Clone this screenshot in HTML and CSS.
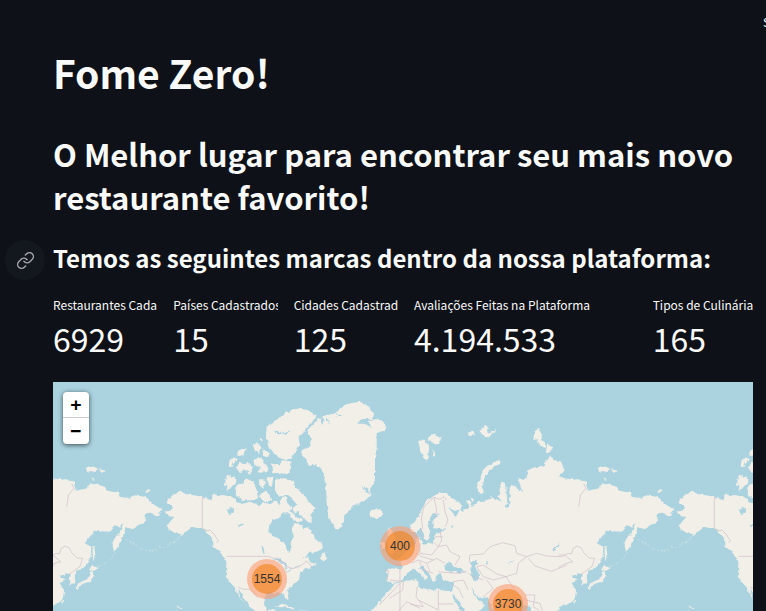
FILE: index.html
```html
<!DOCTYPE html>
<html lang="pt-BR">
<head>
<meta charset="utf-8">
<title>Fome Zero!</title>
<link rel="stylesheet" href="styles.css">
</head>
<body>
<div class="app">
  <header class="toolbar"><button class="share" type="button">Share</button></header>
  <main class="content">
    <h1>Fome Zero!</h1>
    <h2>O Melhor lugar para encontrar seu mais novo restaurante favorito!</h2>
    <div class="section-title">
      <a class="anchor" href="#marcas" aria-label="Link para a seção">
        <svg viewBox="0 0 24 24" fill="none" stroke="currentColor" stroke-width="1.8" stroke-linecap="round" stroke-linejoin="round"><path d="M10 13a5 5 0 0 0 7.54.54l3-3a5 5 0 0 0-7.07-7.07l-1.72 1.71"/><path d="M14 11a5 5 0 0 0-7.54-.54l-3 3a5 5 0 0 0 7.07 7.07l1.71-1.71"/></svg>
      </a>
      <h3 id="marcas">Temos as seguintes marcas dentro da nossa plataforma:</h3>
    </div>
    <dl class="metrics">
      <div class="metric"><dt>Restaurantes Cadastrados</dt><dd>6929</dd></div>
      <div class="metric"><dt>Países Cadastrados</dt><dd>15</dd></div>
      <div class="metric"><dt>Cidades Cadastradas</dt><dd>125</dd></div>
      <div class="metric"><dt>Avaliações Feitas na Plataforma</dt><dd>4.194.533</dd></div>
      <div class="metric"><dt>Tipos de Culinária</dt><dd>165</dd></div>
    </dl>
    <section class="map" aria-label="Mapa de restaurantes">
      <svg class="tiles" viewBox="0 0 700 229" preserveAspectRatio="xMinYMin slice" aria-hidden="true">
        <defs>
          <filter id="coast" filterUnits="userSpaceOnUse" x="-100" y="-20" width="1500" height="290">
            <feTurbulence type="fractalNoise" baseFrequency="0.22" numOctaves="2" seed="4"/>
            <feDisplacementMap in="SourceGraphic" scale="4" xChannelSelector="R" yChannelSelector="G"/>
          </filter>
          <g id="world">
            <g filter="url(#coast)">
            <!-- Alaska, western Canada, Aleutians -->
            <g class="land" transform="translate(-3 -2) scale(.33333)">
              <path d="M345 395L360 392 372 385 350 365 365 348 390 332 410 342 457 350 480 360 500 352 520 345 560 354V640L540 606 530 585 530 545 520 530 500 500 480 465 460 448 440 445 425 440 405 455 395 465 375 485 345 501 385 478 395 460 380 460 360 450 350 440 360 425 374 408 350 405z"/>
              <path d="M127 497L133 500 137 530 130 547 128 520zM125 553L145 565 130 573 119 570zM128 573L130 590 122 607 105 612 82 621 80 612 105 600 118 590 120 575zM76 619L88 620 82 631zM36 660L42 655 40 674zM107 262L117 256 125 262 136 258 142 268 132 277 112 277zM147 268L166 273 161 279 150 276zM122 291L134 297 130 302zM285 331L297 327 302 333 290 336zM380 674L397 686 392 688z"/>
              <path class="isles" d="M228 478L262 500 290 513 320 509 347 500M196 518L180 540 160 552 143 562M325 414L334 419"/>
            </g>
            <!-- Canada, USA, Greenland -->
            <g class="land" transform="translate(167 -2) scale(.33333)">
              <path d="M-20 344L0 345 20 350 40 360 65 372 90 365 115 375 135 368 150 372 165 365 180 375 188 345 198 352 202 370 214 382 205 400 190 400 180 412 160 420 148 435 145 455 160 470 190 485 200 500 205 515 215 505 212 490 222 470 215 450 220 430 240 432 250 445 262 442 275 455 285 475 305 490 310 505 290 515 265 520 250 535 265 530 272 550 290 550 268 565 250 570 240 580 237 600 215 618 200 635 207 655 200 660 190 640 170 638 140 640 132 655 133 680 145 690 165 688 168 700H110L75 660 55 625 60 650 78 678 60 655 45 625 30 610 18 590 20 545 0 515-20 500z"/>
              <path d="M298 535L312 515 322 540 310 543zM165 300L190 295 220 300 225 320 250 345 270 370 287 385 275 400 275 430 255 420 235 395 225 400 215 383 232 374 205 345 185 345 175 350 165 330zM50 315L72 306 80 295 100 305 110 330 114 355 100 360 70 362 47 345zM18 288L45 290 50 305 37 318 25 332 15 315z"/>
              <path d="M140 140L160 125 195 100 225 85 265 90 288 108 275 130 250 155 235 170 240 195 228 210 215 235 195 240 172 230 150 205 138 170zM155 250L180 258 185 240 212 245 208 282 160 278zM118 297L136 300 130 328 117 318zM143 292L160 291 155 320 143 316zM116 345L138 332 150 348 155 362 130 365zM98 193L112 190 124 205 119 222 105 212zM127 208L150 220 143 232 130 228zM121 172L130 180 124 184zM58 210L80 205 70 225 52 228zM25 250L38 232 54 238 40 252 30 262zM48 262L62 245 76 256 82 246 98 263 90 282 72 268 60 280zM100 240L123 230 132 250 145 262 142 276 115 278 123 260 105 258zM204 390L222 402 232 415 240 410 249 420 232 425 210 410z"/>
              <path d="M287 125L310 108 345 100 380 72 420 65 440 75 462 100 460 115 497 130 495 150 470 160 470 210 465 230 465 300 450 330 455 345 430 365 405 375 378 400 365 445 345 445 325 410 320 370 318 320 310 280 300 262 285 255 265 255 262 240 245 225 240 212 270 200 272 175 262 150zM447 395L455 389 480 388 490 402 470 417 454 409zM166 681L185 671 210 678 232 692 200 682zM228 692L260 692 255 700H225z"/>
              <path class="water" d="M160 537L185 535 200 555 197 570 190 550 170 543zM200 572L222 565 205 575zM222 562L240 556 226 564zM17 392L30 385 43 385 35 402 22 400zM52 438L75 428 60 441zM124 495L130 502 134 520 128 516zM160 150L190 160 215 150 195 164 172 162zM302 108L310 120 308 135 300 122zM323 110L329 130 320 122zM345 98L368 108 354 108zM412 128L425 118 450 116 462 121 440 122 457 145 432 128zM425 318L447 330 452 345 438 335z"/>
            </g>
            <!-- Eurasia and north Africa -->
            <g class="land" transform="translate(337 -2) scale(.33333)">
              <path d="M2 565L35 568 38 560 30 545 20 538 35 528 50 515 65 500 78 490 80 468 64 460 60 435 75 425 90 400 97 385 110 362 130 348 150 338 170 340 180 352 200 362 213 372 212 388 195 393 175 383 188 398 197 410 208 394 222 392 237 383 228 362 240 360 243 378 260 370 272 362 290 362 305 352 320 358 335 365 325 350 330 325 338 305 348 312 350 335 352 370 345 385 357 380 360 345 355 325 362 315 380 320 397 335 385 298 405 300 412 275 435 262 460 258 480 228 495 240 515 248 524 270 510 290 535 298 565 298 588 305 593 332 630 325 635 310 660 315 680 320 690 332 720 338 725 350 760 355 765 346 800 350 830 375 850 388 840 405 832 408 820 398 805 400 800 425 765 447 742 442 735 470 725 495 708 515 703 490 710 475 725 460 738 430 725 440 710 435 695 455 650 452 620 490 640 500 638 530 620 560 600 570 590 580 592 610 578 612 575 595 578 585 565 580 545 588 560 600 545 605 558 630 555 655 530 675 510 680 495 700H430L420 680 400 674 380 700H320L300 672 280 682 262 700H-60L-20 650 10 618 12 610 0 608-10 600-8 568z"/>
              <path d="M0 440L15 470 22 505 8 518-10 520-5 500-12 480zM-28 488L-14 485-12 503-26 508zM86 182L105 180 118 205 110 245 98 228 90 210zM112 172L130 164 155 174 145 190 125 190zM128 205L137 228 128 230zM233 158L248 154 256 165 240 168zM268 150L285 138 296 145 288 158 306 155 318 145 310 160 296 172 280 168zM260 325L268 300 285 265 315 245 331 240 328 252 302 266 285 290 276 325 284 340 268 337zM433 155L446 145 456 165 450 180 465 185 465 203 448 196 442 178 430 180zM472 190L489 207 467 220zM242 353L254 356 246 363z"/>
              <path class="water" d="M10 609L38 602 45 585 60 572 75 568 85 575 100 590 108 600 113 590 98 575 88 562 95 555 120 585 128 605 140 602 137 585 150 580 155 590 160 602 185 603 192 612 187 634 160 632 140 622 130 634 105 625 85 620 85 605 75 598 40 605 20 610zM165 570L163 552 180 546 192 555 188 560 215 565 222 578 195 577 175 574zM240 548L255 542 266 548 255 560 265 575 268 600 250 602 243 585 245 570zM187 640L200 655 230 700H218L190 655zM243 625L255 640 275 655 294 652 302 672 290 680 265 660 250 645zM97 480L115 478 120 455 113 435 118 420 130 400 145 398 143 410 130 422 132 445 165 448 160 454 140 458 132 470 128 490 100 494zM60 456L84 456 92 445 100 455 105 478 98 488 90 470 78 480zM117 415L122 430 112 440zM484 512L505 495 508 483 507 500 492 514zM350 550L374 544 362 550zM286 545L294 543 290 556zM183 440L190 435 190 443zM70 580L74 578 73 596 69 595z"/>
            </g>
            </g>
            <g class="border" transform="translate(-3 -2) scale(.33333)">
              <path d="M457 350V445L470 452 480 450 492 462 505 482 500 488M-10 525L8 525 20 520 28 522 34 505 45 498 58 504 66 520 82 534 98 535 90 560 72 572 56 584M8 525L32 545 8 552-10 562M65 310L72 325 55 345 50 380"/>
              <path d="M530 529H655L700 545 708 560 730 566 755 555 770 543 785 560M565 622L582 628 600 628 625 655"/>
              <path d="M1104 480L1118 440 1114 415 1122 380 1138 365 1152 352 1170 358 1182 350 1190 360M1152 352L1160 390 1155 415M1180 360L1185 395 1194 420 1186 440M1170 450L1175 480 1165 500 1150 485M1110 490V520L1145 525 1165 500 1190 495 1200 515 1230 530 1215 555M1100 520L1115 530 1150 540M1085 550L1105 540 1130 550 1160 535 1185 550M1070 540L1090 525M1108 545L1120 570 1150 580M1130 550L1140 575M1155 470L1178 470M1258 545L1260 525 1300 522 1320 500 1358 488 1395 497 1400 520 1430 530 1405 550 1400 580 1368 590 1340 582 1300 555 1280 560 1300 590M1430 530L1460 520 1490 528 1530 530 1545 527M1435 535L1455 558 1505 574 1550 555M1255 580L1270 590 1300 600M1300 590L1330 600 1368 590 1395 630 1425 660 1470 670 1480 700M1310 600L1330 625 1300 650M1020 600L1060 605 1058 630 1018 655M1102 620L1098 650 1120 680 1080 672M1165 630V690L1105 660M1040 700L1070 665 1110 685M1165 672H1210M1210 605L1240 600 1255 630M1200 610L1225 625 1240 655M1165 575L1220 580 1250 575M1425 645H1455L1450 680 1470 693M1000 570L1015 572 1012 600M1050 560V700M988 675L1050 610"/>
            </g>
          </g>
        </defs>
        <use href="#world" x="-512"/>
        <use href="#world"/>
        <use href="#world" x="512"/>
      </svg>
      <div class="zoom">
        <button type="button" aria-label="Aproximar">+</button>
        <button type="button" aria-label="Afastar">−</button>
      </div>
      <div class="cluster north-america"><span>1554</span></div>
      <div class="cluster europe"><span>400</span></div>
      <div class="cluster asia"><span>3730</span></div>
    </section>
  </main>
</div>
</body>
</html>
```
FILE: styles.css
```css
* { box-sizing: border-box; }
body {
  margin: 0;
  background: #0e1117;
  color: #fafafa;
  font-family: "Noto Sans CJK SC", "Noto Sans", sans-serif;
}
.app {
  height: 100vh;
  overflow: hidden;
  display: flex;
  flex-direction: column;
}
.toolbar {
  height: 44px;
  flex: none;
  display: flex;
  align-items: center;
  padding-left: calc(100% - 3px);
}
.share {
  border: 0;
  padding: 0;
  background: none;
  color: inherit;
  font: 12px/16px "Noto Sans CJK SC", sans-serif;
}
.content {
  flex: 1;
  min-height: 0;
  display: flex;
  flex-direction: column;
  padding: 0 9px 0 53px;
}
h1, h2, h3 { margin: 0; }
h1 { font-size: 39px; line-height: 56px; font-weight: 700; }
h2 { font-size: 31px; line-height: 43px; font-weight: 700; margin-top: 32px; }
h3 { font-size: 24px; line-height: 36px; font-weight: 700; white-space: nowrap; }
.section-title {
  display: flex;
  margin: 22px 0 0 -48px;
  gap: 8px;
}
.anchor {
  flex: none;
  width: 40px;
  height: 40px;
  border-radius: 50%;
  background: #13171e;
  color: #a5a7aa;
  display: flex;
  align-items: center;
  justify-content: center;
}
.anchor svg { width: 19px; height: 19px; }
.metrics {
  display: grid;
  grid-template-columns: 104fr 104fr 104fr 222fr 104fr;
  gap: 16px;
  margin: 14px 0 0;
}
.metric { min-width: 0; }
.metric dt {
  font-size: 12px;
  line-height: 22px;
  white-space: nowrap;
  overflow: hidden;
}
.metric dd {
  margin: 0;
  font-size: 32px;
  line-height: 44px;
}
.map {
  position: relative;
  flex: 1;
  min-height: 0;
  max-width: 700px;
  margin-top: 22px;
  background: #aad3df;
  overflow: hidden;
  font-family: "Liberation Sans", Arial, sans-serif;
}
.tiles { display: block; width: 100%; height: 100%; }
.land { fill: #f2efe9; }
.land .water { fill: #aad3df; }
.land .isles { fill: none; stroke: #dfe6e3; stroke-width: 2; stroke-dasharray: 5 6; }
.border { fill: none; stroke: #cfbcc7; stroke-width: 2; stroke-linejoin: round; }
.zoom {
  position: absolute;
  top: 10px;
  left: 10px;
  width: 26px;
  border-radius: 4px;
  background: #fff;
  box-shadow: 0 1px 5px rgba(0, 0, 0, .65);
}
.zoom button {
  display: block;
  width: 26px;
  height: 26px;
  padding: 0;
  border: 0;
  background: none;
  color: #000;
  font: bold 18px/26px "DejaVu Sans Mono", monospace;
}
.zoom button:first-child { border-bottom: 1px solid #ccc; }
.cluster {
  position: absolute;
  width: 40px;
  height: 40px;
  padding: 5px;
  border-radius: 50%;
  background: rgba(253, 156, 115, .6);
}
.cluster span {
  display: block;
  height: 30px;
  border-radius: 50%;
  background: rgba(241, 128, 23, .6);
  color: #333;
  font-size: 12px;
  line-height: 30px;
  text-align: center;
}
.north-america { left: 194px; top: 177px; }
.europe { left: 327px; top: 144px; }
.asia { left: 435px; top: 202px; }
```
